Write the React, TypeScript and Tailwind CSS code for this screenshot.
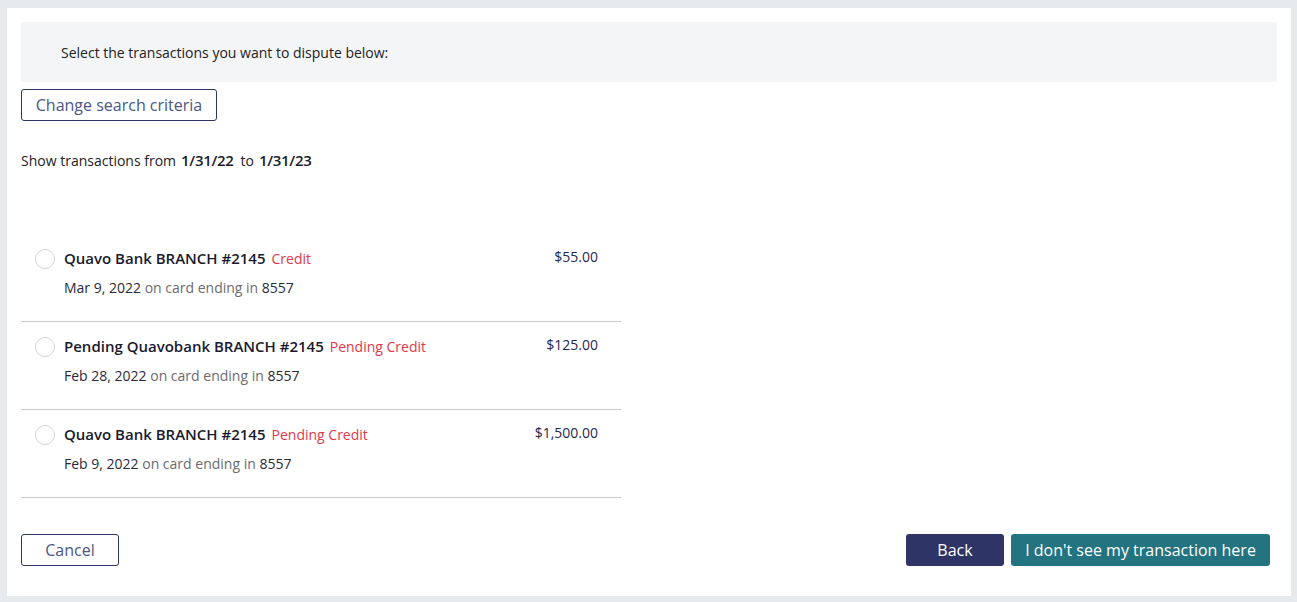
import React from "react";

const rows = [
  { name: "Quavo Bank BRANCH #2145", tag: "Credit", date: "Mar 9, 2022", amount: "$55.00" },
  { name: "Pending Quavobank BRANCH #2145", tag: "Pending Credit", date: "Feb 28, 2022", amount: "$125.00" },
  { name: "Quavo Bank BRANCH #2145", tag: "Pending Credit", date: "Feb 9, 2022", amount: "$1,500.00" },
];

export default function App() {
  return (
    <div
      className="w-[1297px] h-[602px] bg-[#e6eaed] pt-[8px] pl-[7px] pr-[6px] pb-[6px]"
      style={{ fontFamily: '"Open Sans", "Noto Sans", sans-serif' }}
    >
      <div className="bg-white h-[588px] px-[14px] pt-[14px] flex flex-col">
        <div className="h-[60px] bg-[#f4f5f7] flex items-center pl-[40px] text-[14px] text-[#222]">
          Select the transactions you want to dispute below:
        </div>
        <div className="mt-[7px]">
          <button className="h-[32px] w-[196px] border border-[#2e3566] rounded-[3px] text-[16px] text-[#4b5687] bg-white">
            Change search criteria
          </button>
        </div>
        <div className="mt-[29px] text-[14px] text-[#222] flex items-baseline leading-[20px]">
          <span>Show transactions from</span>
          <span className="ml-[5px] text-[15px] font-semibold tracking-[-0.3px] text-[#1c1c2c]">1/31/22</span>
          <span className="ml-[7px]">to</span>
          <span className="ml-[5px] text-[15px] font-semibold tracking-[-0.3px] text-[#1c1c2c]">1/31/23</span>
        </div>
        <div className="mt-[63px] w-[600px]">
          {rows.map((r, i) => (
            <div key={i} className="h-[88px] border-b border-[#c8c9cc] flex pl-[14px] pr-[23px] pt-[13px]">
              <div className="w-[20px] h-[20px] rounded-full border border-[#d3d6dc] bg-white mt-[2px]" />
              <div className="ml-[9px] flex-1">
                <div className="flex items-baseline leading-[22px]">
                  <span className="text-[15px] font-semibold text-[#1a1a2e]">{r.name}</span>
                  <span className="ml-[6px] text-[14px] text-[#e0394b]">{r.tag}</span>
                </div>
                <div className="mt-[8px] text-[14px] leading-[20px]">
                  <span className="text-[#2a2a3a]">{r.date}</span>
                  <span className="text-[#6b6b70]"> on card ending in </span>
                  <span className="text-[#2a2a3a]">8557</span>
                </div>
              </div>
              <div className="text-[14px] text-[#1f2750] leading-[20px]">{r.amount}</div>
            </div>
          ))}
        </div>
        <div className="mt-[36px] flex items-center">
          <button className="h-[32px] w-[98px] border border-[#2e3566] rounded-[3px] text-[16px] text-[#4b5687] bg-white">
            Cancel
          </button>
          <div className="flex-1" />
          <button className="h-[32px] w-[98px] rounded-[3px] text-[16px] text-white bg-[#2e3566]">
            Back
          </button>
          <button className="ml-[7px] h-[32px] w-[259px] rounded-[3px] text-[16px] text-white bg-[#237380] mr-[7px]">
            I don't see my transaction here
          </button>
        </div>
      </div>
    </div>
  );
}
